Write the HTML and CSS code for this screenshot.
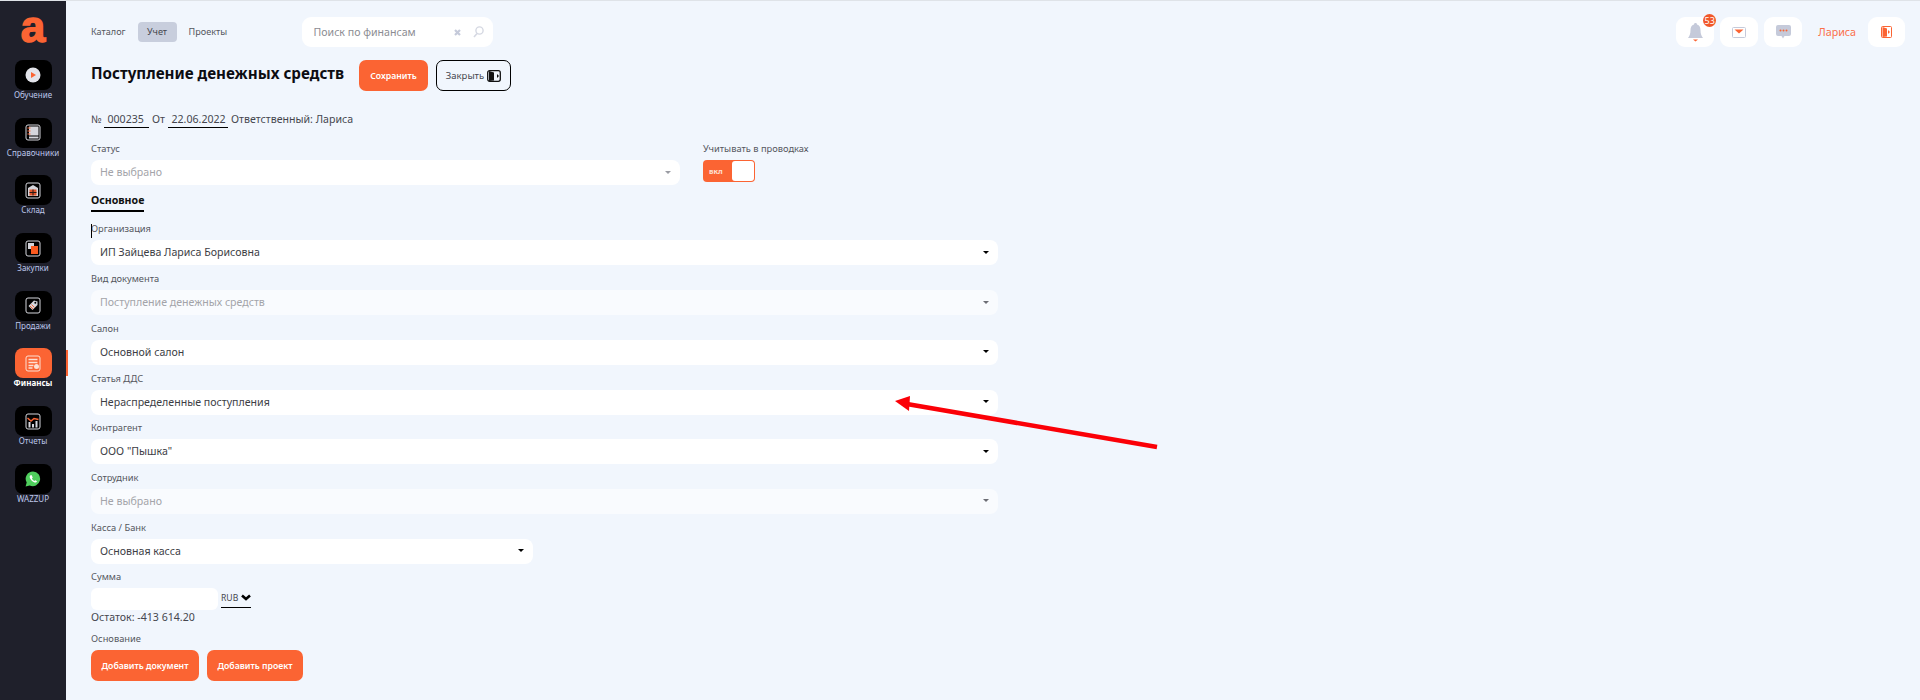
FILE: index.html
```html
<!DOCTYPE html>
<html lang="ru">
<head>
    <meta charset="UTF-8">
    <title>Поступление денежных средств</title>
    <link rel="stylesheet" href="styles.css">
</head>
<body>
    <aside class="sidebar">
        <div class="logo">a</div>
        <nav class="side-nav">
            <a class="side-item">
                <span class="side-icon">
                    <svg width="16" height="16" viewBox="0 0 16 16"><circle cx="8" cy="8" r="7.5" fill="#e3e4ea"/><path d="M6 5l5 3-5 3z" fill="#fb6433"/></svg>
                </span>
                Обучение
            </a>
            <a class="side-item">
                <span class="side-icon">
                    <svg width="16" height="17" viewBox="0 0 16 17"><rect x="1" y="1" width="14" height="15" rx="2" fill="none" stroke="#d5d6dc"/><rect x="4" y="2.5" width="9.5" height="9" fill="#d5d6dc"/><rect x="4" y="12.5" width="9.5" height="2" fill="#d5d6dc"/><path d="M2.5 4h3M2.5 7h3M2.5 10h3" stroke="#fb6433" stroke-width="1.2"/></svg>
                </span>
                Справочники
            </a>
            <a class="side-item">
                <span class="side-icon">
                    <svg width="16" height="17" viewBox="0 0 16 17"><rect x="1" y="1" width="14" height="15" rx="2" fill="none" stroke="#d5d6dc"/><path d="M3 6l5-3 5 3v8H3z" fill="#d5d6dc"/><rect x="4.5" y="7.5" width="7" height="6" fill="#e0542a"/><path d="M8 7.5v6M4.5 10.5h7" stroke="#2a1a14"/></svg>
                </span>
                Склад
            </a>
            <a class="side-item">
                <span class="side-icon">
                    <svg width="16" height="17" viewBox="0 0 16 17"><rect x="1" y="1" width="14" height="15" rx="2" fill="none" stroke="#d5d6dc"/><rect x="3" y="3" width="6" height="6" fill="#d5d6dc"/><rect x="6" y="6" width="7" height="8" fill="#fb5a1f"/></svg>
                </span>
                Закупки
            </a>
            <a class="side-item">
                <span class="side-icon">
                    <svg width="16" height="17" viewBox="0 0 16 17"><rect x="1" y="1" width="14" height="15" rx="2" fill="none" stroke="#d5d6dc"/><path d="M9 3.5l3.5 1V8l-5 5-4-4z" fill="#d5d6dc"/><path d="M5 9l3 3M6.5 7.5l3 3" stroke="#fb6433"/><circle cx="10.3" cy="5.8" r="1" fill="#000"/></svg>
                </span>
                Продажи
            </a>
            <a class="side-item active">
                <span class="side-icon">
                    <svg width="16" height="17" viewBox="0 0 16 17"><rect x="1" y="1" width="14" height="15" rx="2" fill="none" stroke="#fde0d4"/><path d="M3.5 4.5h9M3.5 7.5h9M3.5 10.5h5M3.5 13h4" stroke="#fde0d4" stroke-width="1.5"/><circle cx="11.5" cy="11.5" r="2.5" fill="#fde0d4"/></svg>
                </span>
                Финансы
            </a>
            <a class="side-item">
                <span class="side-icon">
                    <svg width="16" height="17" viewBox="0 0 16 17"><rect x="1" y="1" width="14" height="15" rx="2" fill="none" stroke="#d5d6dc"/><path d="M3.5 9v5.5h2V9zM7 11v3.5h2V11zM10.5 8v6.5h2V8z" fill="#d5d6dc"/><path d="M2.5 5L6 8l3-2.500 4.500 1" fill="none" stroke="#fb6433" stroke-width="1.5"/></svg>
                </span>
                Отчеты
            </a>
            <a class="side-item">
                <span class="side-icon">
                    <svg width="16" height="16" viewBox="0 0 16 16"><path d="M8 .5a7.3 7.3 0 0 0-6.3 11L.6 15.5l4.100-1.100A7.3 7.3 0 1 0 8 .5z" fill="#4fce5d"/><path d="M5.500 4.200c-.9.600-1.100 1.800-.3 3.300.9 1.800 2.500 3.300 4.300 3.900 1.200.4 2.200-.1 2.500-1.100l-1.700-1.100-.9.800c-1-.4-2-1.400-2.500-2.500l.8-.8-.9-2.500z" fill="#fff"/></svg>
                </span>
                WAZZUP
            </a>
        </nav>
        <span class="side-marker"></span>
    </aside>

    <main class="content">
        <header class="topbar">
            <div class="tabs">
                <a class="tab">Каталог</a>
                <a class="tab current">Учет</a>
                <a class="tab">Проекты</a>
            </div>
            <div class="search">
                <span class="search-text">Поиск по финансам</span>
                <svg width="7" height="7" viewBox="0 0 7 7"><path d="M1 1l5 5M6 1L1 6" stroke="#c5cada" stroke-width="2.2"/></svg>
                <svg width="11" height="12" viewBox="0 0 11 12"><circle cx="6.5" cy="4.5" r="3.6" fill="none" stroke="#d5d8e2" stroke-width="1.4"/><path d="M4 7.5L1 11" stroke="#d5d8e2" stroke-width="1.6"/></svg>
            </div>
            <div class="top-actions">
                <span class="top-btn">
                    <svg width="15" height="19" viewBox="0 0 15 19"><path d="M7.5 0c1 0 1.500.7 1.500 1.500 2.500.8 3.500 3 3.500 5.500 0 4 1 6 2.500 8H0c1.500-2 2.500-4 2.500-8 0-2.500 1-4.700 3.500-5.500C6 .7 6.500 0 7.500 0z" fill="#c5cada"/><path d="M5 16.500h5l-2.500 2z" fill="#fb6433"/></svg>
                    <span class="badge">53</span>
                </span>
                <span class="top-btn">
                    <svg width="14" height="11" viewBox="0 0 14 11"><rect x=".5" y=".5" width="13" height="10" rx="1" fill="#fff" stroke="#c5cada"/><path d="M2.5 2.5h9L7 6.500z" fill="#fb6433"/></svg>
                </span>
                <span class="top-btn">
                    <svg width="15" height="14" viewBox="0 0 15 14"><path d="M2 0h11a2 2 0 0 1 2 2v7a2 2 0 0 1-2 2H8.5L7 13.5 5.500 11H2a2 2 0 0 1-2-2V2a2 2 0 0 1 2-2z" fill="#c5cada"/><circle cx="4.500" cy="5.500" r="1" fill="#fb6433"/><circle cx="7.500" cy="5.500" r="1" fill="#fb6433"/><circle cx="10.500" cy="5.500" r="1" fill="#fb6433"/></svg>
                </span>
                <span class="user-name">Лариса</span>
                <span class="top-btn exit">
                    <svg width="11" height="12" viewBox="0 0 11 12"><rect x=".5" y=".5" width="10" height="11" rx="1" fill="none" stroke="#fb6433"/><path d="M1.5 1L6 2.500v8L1.500 11z" fill="#fb6433"/><path d="M7 4l2 2-2 2z" fill="#fb6433"/></svg>
                </span>
            </div>
        </header>

        <div class="title-row">
            <h1>Поступление денежных средств</h1>
            <button class="btn save">Сохранить</button>
            <button class="btn-outline">
                Закрыть
                <svg width="14" height="12" viewBox="0 0 14 12"><rect x=".7" y=".7" width="12.6" height="10.6" rx="2" fill="none" stroke="#111" stroke-width="1.3"/><path d="M2 1l5 1.500v8L2 11z" fill="#111"/><path d="M10 4l2 2-2 2z" fill="#111"/></svg>
            </button>
        </div>

        <div class="doc-line">
            <span class="doc-no">№</span>
            <span class="doc-value num">000235</span>
            <span class="doc-from">От</span>
            <span class="doc-value date">22.06.2022</span>
            <span>Ответственный: Лариса</span>
        </div>

        <div class="status-row">
            <div class="status-col">
                <label>Статус</label>
                <div class="select placeholder light-arrow">Не выбрано</div>
            </div>
            <div class="toggle-col">
                <label>Учитывать в проводках</label>
                <div class="toggle"><span class="toggle-text">вкл</span><span class="toggle-thumb"></span></div>
            </div>
        </div>

        <div class="section-title"><span>Основное</span></div>

        <section class="form">
            <span class="text-cursor"></span>
            <div class="field">
                <label>Организация</label>
                <div class="select">ИП Зайцева Лариса Борисовна</div>
            </div>
            <div class="field">
                <label>Вид документа</label>
                <div class="select disabled">Поступление денежных средств</div>
            </div>
            <div class="field">
                <label>Салон</label>
                <div class="select">Основной салон</div>
            </div>
            <div class="field">
                <label>Статья ДДС</label>
                <div class="select">Нераспределенные поступления</div>
            </div>
            <div class="field">
                <label>Контрагент</label>
                <div class="select">ООО "Пышка"</div>
            </div>
            <div class="field">
                <label>Сотрудник</label>
                <div class="select disabled">Не выбрано</div>
            </div>
            <div class="field short">
                <label>Касса / Банк</label>
                <div class="select">Основная касса</div>
            </div>
            <div class="field">
                <label>Сумма</label>
                <div class="sum-row">
                    <div class="sum-input"></div>
                    <div class="currency">RUB
                        <svg width="10" height="7" viewBox="0 0 10 7"><path d="M1 1.500l4 3.500 4-3.500" fill="none" stroke="#000" stroke-width="2.6"/></svg>
                    </div>
                </div>
            </div>
            <div class="balance">Остаток: -413 614.20</div>
            <label class="base-label">Основание</label>
            <div class="base-buttons">
                <button class="btn">Добавить документ</button>
                <button class="btn">Добавить проект</button>
            </div>
        </section>

        <svg class="arrow" width="270" height="62" viewBox="0 0 270 62">
            <path d="M14 13.500L267 57" stroke="#fb0007" stroke-width="4.5" fill="none"/>
            <path d="M5 11L20 6l-1 15z" fill="#fb0007"/>
        </svg>
    </main>
</body>
</html>
```

FILE: styles.css
```css
* {
    box-sizing: border-box;
}

html, body {
    height: 700px;
    overflow: hidden;
}

body {
    margin: 0;
    display: flex;
    font-family: "Noto Sans", "Open Sans", sans-serif;
    font-size: 10.6px;
    color: #45464e;
    background: #f1f6fd;
    border-top: 1px solid #dfe3e8;
}

/* sidebar */

.sidebar {
    position: relative;
    width: 66px;
    flex-shrink: 0;
    background: #1f202b;
    display: flex;
    flex-direction: column;
}

.logo {
    height: 59px;
    text-align: center;
    font-family: "Liberation Sans", sans-serif;
    font-size: 44px;
    line-height: 52px;
    font-weight: 700;
    color: #fb6433;
    -webkit-text-stroke: 1.5px #fb6433;
}

.side-nav {
    display: flex;
    flex-direction: column;
    gap: 15.7px;
}

.side-item {
    height: 42px;
    display: flex;
    flex-direction: column;
    align-items: center;
    font-size: 8px;
    line-height: 10px;
    color: #bcc6ea;
    white-space: nowrap;
}

.side-icon {
    width: 37px;
    height: 30px;
    flex-shrink: 0;
    background: #000;
    border-radius: 8px;
    display: flex;
    align-items: center;
    justify-content: center;
}

.side-item.active {
    color: #fff;
    font-weight: 700;
}

.side-item.active .side-icon {
    background: #fb6433;
}

.side-marker {
    position: absolute;
    left: 66px;
    top: 349px;
    width: 2px;
    height: 26px;
    background: #fb6433;
}

/* main */

.content {
    position: relative;
    flex: 1;
    padding: 16px 15px 0 25px;
}

.topbar {
    display: flex;
    align-items: center;
    height: 30px;
}

.tabs {
    display: flex;
    align-items: center;
    gap: 12px;
    width: 211px;
    font-size: 9.1px;
}

.tab {
    height: 20px;
    line-height: 20px;
    color: #55565e;
}

.tab.current {
    width: 39px;
    text-align: center;
    background: #c8cedd;
    border-radius: 4px;
    color: #45464e;
}

.search {
    width: 191px;
    height: 30px;
    background: #fff;
    border-radius: 9px;
    display: flex;
    align-items: center;
    padding: 0 9px 0 11.5px;
    gap: 12px;
}

.search-text {
    flex: 1;
    color: #8b8c92;
}

.top-actions {
    margin-left: auto;
    display: flex;
    align-items: center;
    gap: 6px;
}

.top-btn {
    position: relative;
    width: 38px;
    height: 30px;
    background: #fff;
    border-radius: 9px;
    display: flex;
    align-items: center;
    justify-content: center;
}

.top-btn.exit {
    width: 37px;
}

.badge {
    position: absolute;
    top: -3px;
    right: -2px;
    width: 13px;
    height: 13px;
    border-radius: 50%;
    background: #f1582a;
    color: #fff;
    font-size: 9px;
    line-height: 13px;
    text-align: center;
}

.user-name {
    margin: 0 6px 0 10px;
    font-size: 10.7px;
    color: #fb6f4a;
}

.title-row {
    display: flex;
    align-items: flex-start;
    margin-top: 13px;
}

h1 {
    flex: none;
    width: 268px;
    margin: 0;
    font-size: 15.2px;
    line-height: 26px;
    font-weight: 700;
    color: #0d0d12;
}

.btn {
    font-family: inherit;
    font-size: 8.7px;
    font-weight: 600;
    color: #fff;
    background: #fb6433;
    border: 0;
    border-radius: 7px;
    height: 31px;
    padding: 0 10.5px;
}

.btn.save {
    width: 69px;
    padding: 0;
}

.btn-outline {
    font-family: inherit;
    font-size: 9.5px;
    color: #45464e;
    background: transparent;
    border: 1px solid #000;
    border-radius: 7px;
    height: 31px;
    width: 75px;
    margin-left: 8px;
    display: flex;
    align-items: center;
    justify-content: center;
    gap: 3px;
    padding: 0;
}

.doc-line {
    display: flex;
    gap: 3px;
    margin-top: 18px;
    height: 20px;
    line-height: 20px;
    white-space: nowrap;
}

.doc-no {
    width: 10px;
}

.doc-from {
    width: 13px;
}

.doc-value {
    height: 19px;
    border-bottom: 1px solid #000;
    padding: 0 3.5px;
}

.doc-value.num {
    width: 45px;
}

.doc-value.date {
    width: 60px;
}

label {
    display: block;
    font-size: 9.3px;
    line-height: 16px;
    color: #55565e;
}

.status-row {
    display: flex;
    margin-top: 12px;
}

.status-col {
    width: 589px;
}

.toggle-col {
    margin-left: 23px;
}

.status-row label {
    margin-bottom: 3px;
}

.select {
    position: relative;
    height: 25px;
    line-height: 25px;
    padding: 0 9px;
    background: #fff;
    border-radius: 8px;
    color: #3c3d44;
}

.select::after {
    content: "";
    position: absolute;
    right: 9.5px;
    top: 10.5px;
    border-left: 3.5px solid transparent;
    border-right: 3.5px solid transparent;
    border-top: 3.5px solid #000;
}

.select.placeholder {
    color: #a3a4a9;
}

.select.light-arrow::after {
    border-top-color: #9a9ca3;
}

.select.disabled {
    background: #f9fbfe;
    color: #a3a4a9;
}

.select.disabled::after {
    border-top-color: #6c6d74;
}

.toggle {
    position: relative;
    width: 52px;
    height: 22px;
    background: #fb6433;
    border-radius: 4px;
}

.toggle-text {
    position: absolute;
    left: 6px;
    top: 3px;
    font-size: 7.5px;
    line-height: 16px;
    font-weight: 700;
    color: #fde0d4;
}

.toggle-thumb {
    position: absolute;
    right: 1px;
    top: 1px;
    width: 22px;
    height: 20px;
    background: #fff;
    border-radius: 3px;
}

.section-title {
    margin-top: 5px;
    height: 22px;
    font-size: 10.6px;
    font-weight: 700;
    line-height: 20px;
    color: #111;
}

.section-title span {
    display: inline-block;
    height: 22px;
    border-bottom: 2px solid #000;
}

.form {
    position: relative;
    margin-top: 3.8px;
}

.text-cursor {
    position: absolute;
    left: 0;
    top: 8.2px;
    width: 1px;
    height: 14px;
    background: #000;
}

.field {
    width: 907px;
    padding-top: 5.7px;
    height: 49.7px;
}

.field label {
    margin-bottom: 3px;
}

.field.short {
    width: 442px;
}

.sum-row {
    display: flex;
    align-items: flex-end;
    gap: 3px;
}

.sum-input {
    width: 127px;
    height: 22px;
    background: #fff;
    border-radius: 6px;
}

.currency {
    width: 30px;
    height: 20px;
    display: flex;
    align-items: center;
    justify-content: space-between;
    border-bottom: 1px solid #000;
    font-size: 8.6px;
    margin-bottom: 2px;
}

.balance {
    margin-top: -3.9px;
    line-height: 16px;
}

.base-label {
    margin-top: 6px;
}

.base-buttons {
    display: flex;
    gap: 8px;
    margin-top: 3px;
}

/* annotation drawn over the form */

.arrow {
    position: absolute;
    left: 824px;
    top: 389px;
    overflow: visible;
}
```
